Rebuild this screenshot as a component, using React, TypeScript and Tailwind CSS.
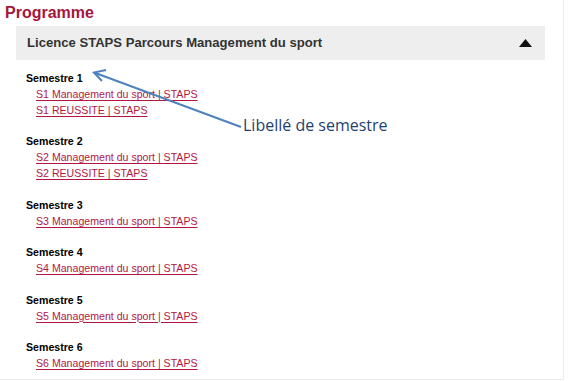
import React from "react";

const semesters: { label: string; links: string[] }[] = [
  { label: "Semestre 1", links: ["S1 Management du sport | STAPS", "S1 REUSSITE | STAPS"] },
  { label: "Semestre 2", links: ["S2 Management du sport | STAPS", "S2 REUSSITE | STAPS"] },
  { label: "Semestre 3", links: ["S3 Management du sport | STAPS"] },
  { label: "Semestre 4", links: ["S4 Management du sport | STAPS"] },
  { label: "Semestre 5", links: ["S5 Management du sport | STAPS"] },
  { label: "Semestre 6", links: ["S6 Management du sport | STAPS"] },
];

export default function App() {
  return (
    <div className="relative w-[564px] h-[380px] bg-white border-r border-b border-[#ececec] overflow-hidden font-['Liberation_Sans',Arial,sans-serif]">
      <h1 className="pl-[5px] pt-[2px] text-[16px] leading-[22px] font-bold text-[#a6163c]">Programme</h1>
      <div className="ml-[16px] w-[529px] mt-[2px] h-[34px] bg-[#eeeeee] flex items-center justify-between pl-[11px] pr-[13px]">
        <span className="text-[13.1px] font-bold text-[#333333]">Licence STAPS Parcours Management du sport</span>
        <svg width="13" height="8" viewBox="0 0 13 8">
          <polygon points="6.5,0 13,8 0,8" fill="#111" />
        </svg>
      </div>
      <div className="pl-[26px] pt-[10px] flex flex-col gap-[15.4px]">
        {semesters.map((s) => (
          <div key={s.label} className="flex flex-col">
            <div className="text-[10.6px] leading-[16px] font-bold text-black">{s.label}</div>
            {s.links.map((l) => (
              <a
                key={l}
                href="#"
                className="ml-[10px] text-[10.6px] leading-[16px] text-[#b3173f] underline underline-offset-[2px]"
              >
                {l}
              </a>
            ))}
          </div>
        ))}
      </div>
      <svg className="absolute left-0 top-0 pointer-events-none" width="564" height="380">
        <line x1="241" y1="127" x2="94" y2="72.5" stroke="#4f81bd" strokeWidth="2" />
        <polyline points="106,70 94,72.5 102,81" fill="none" stroke="#4f81bd" strokeWidth="2" />
      </svg>
      <div className="absolute left-[243px] top-[115px] text-[16px] leading-[20px] text-[#1f3f6e] font-['Open_Sans',sans-serif]">
        Libellé de semestre
      </div>
    </div>
  );
}
